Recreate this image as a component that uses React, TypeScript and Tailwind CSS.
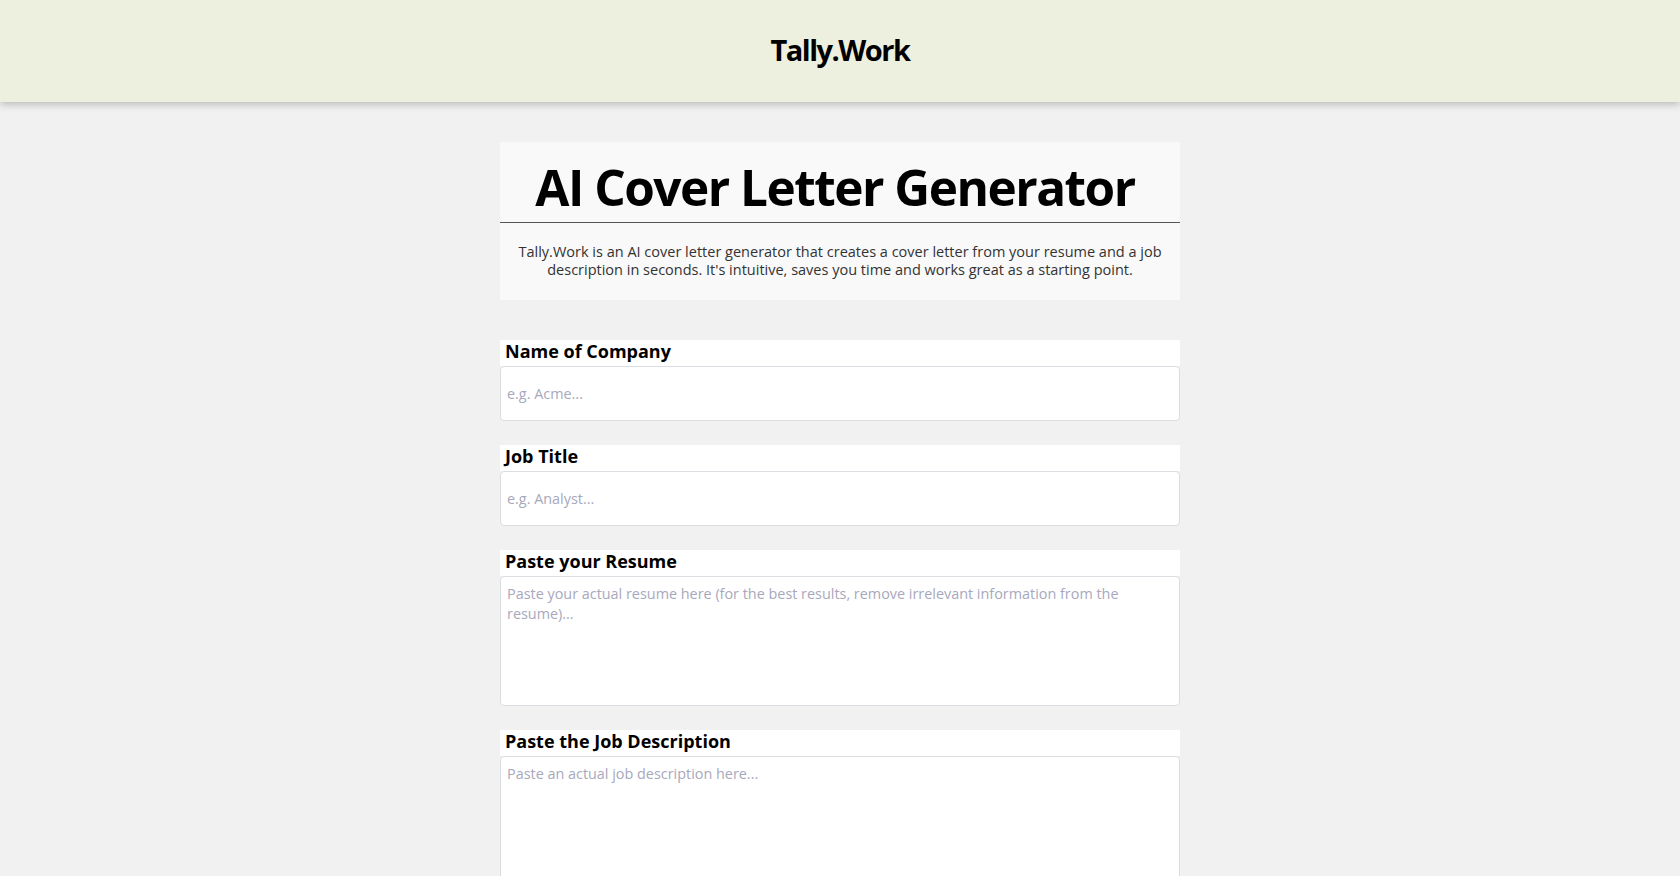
export default function App() {
  const fields = [
    { label: "Name of Company", placeholder: "e.g. Acme...", multi: false },
    { label: "Job Title", placeholder: "e.g. Analyst...", multi: false },
    {
      label: "Paste your Resume",
      placeholder:
        "Paste your actual resume here (for the best results, remove irrelevant information from the resume)...",
      multi: true,
      h: "h-[130px]",
    },
    { label: "Paste the Job Description", placeholder: "Paste an actual job description here...", multi: true, h: "h-[200px]" },
  ];

  return (
    <div className="min-h-screen bg-[#f1f1f1] font-['Open_Sans',sans-serif] text-black">
      <header className="h-[102px] pb-[4px] bg-[#eef0df] shadow-[0_2px_8px_rgba(0,0,0,0.25)] flex items-center justify-center">
        <h1 className="text-[29px] font-bold tracking-[-1.5px] leading-none">Tally.Work</h1>
      </header>

      <main className="w-[680px] mx-auto pt-10 pb-10">
        <section className="bg-[#f9f9f9]">
          <h2 className="h-[81px] pt-[21px] pr-[10px] text-center text-[49.5px] font-bold tracking-[-1.5px] leading-none border-b border-[#555]">
            AI Cover Letter Generator
          </h2>
          <p className="px-4 pt-[20px] pb-[21px] text-center text-[14.5px] leading-[18px] text-[#333]">
            Tally.Work is an AI cover letter generator that creates a cover letter from your resume and a job description in seconds. It's intuitive, saves you time and works great as a starting point.
          </p>
        </section>

        <form className="mt-10 flex flex-col gap-[24px]">
          {fields.map((f) => (
            <div key={f.label}>
              <label className="block bg-white px-[5px] h-[26px] text-[18px] font-bold leading-[22px]">{f.label}</label>
              {f.multi ? (
                <textarea
                  placeholder={f.placeholder}
                  className={`block w-full ${f.h} bg-white border border-[#dcdce3] rounded-[4px] px-[6px] py-[7px] text-[14.4px] leading-[20px] placeholder:text-[#a8a8bc] resize-none outline-none`}
                />
              ) : (
                <input
                  placeholder={f.placeholder}
                  className="block w-full h-[55px] bg-white border border-[#dcdce3] rounded-[4px] px-[6px] text-[14.4px] placeholder:text-[#a8a8bc] outline-none"
                />
              )}
            </div>
          ))}
        </form>
      </main>
    </div>
  );
}
